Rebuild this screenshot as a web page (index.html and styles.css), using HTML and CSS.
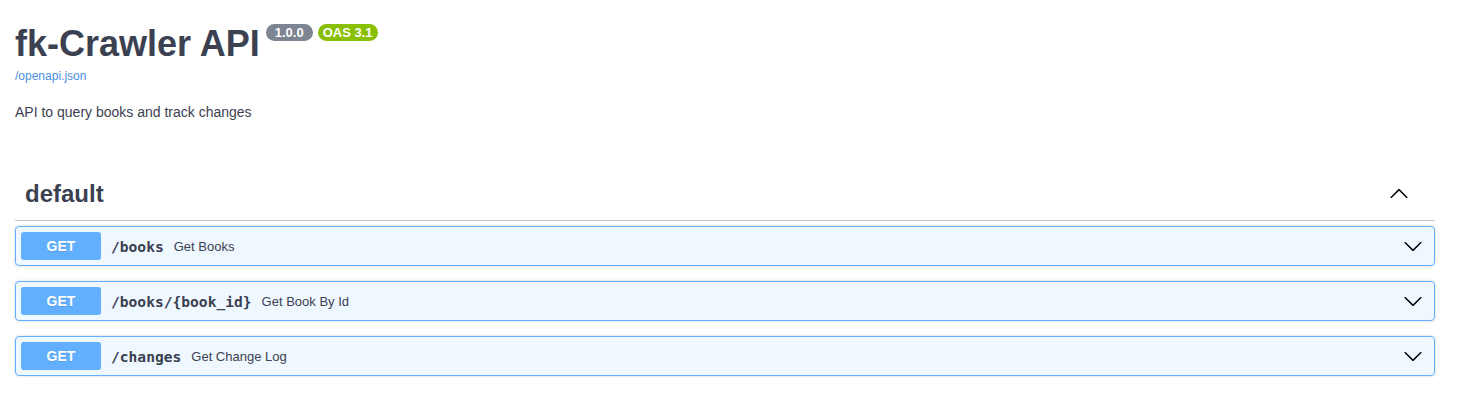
FILE: index.html
```html
<!DOCTYPE html>
<html lang="en">
<head>
<meta charset="utf-8">
<title>fk-Crawler API</title>
<link rel="stylesheet" href="styles.css">
</head>
<body>
<div class="page">
  <div class="info">
    <div class="title-row">
      <h2 class="title">fk-Crawler API</h2>
      <span class="badge badge-version">1.0.0</span>
      <span class="badge badge-oas">OAS 3.1</span>
    </div>
    <a class="spec-link" href="#">/openapi.json</a>
    <p class="desc">API to query books and track changes</p>
  </div>

  <section class="tag-section">
    <h3 class="tag-head">
      <span class="tag-name">default</span>
      <svg class="arrow arrow-up" width="20" height="20" viewBox="0 0 20 20"><path d="M17.418 6.109c.272-.268.709-.268.979 0s.271.701 0 .969l-7.908 7.83c-.27.268-.707.268-.979 0l-7.908-7.830c-.27-.268-.27-.701 0-.969.271-.268.709-.268.979 0L10 13.25l7.418-7.141z"/></svg>
    </h3>

    <div class="op">
      <span class="method">GET</span>
      <span class="path">/books</span>
      <span class="summary">Get Books</span>
      <svg class="arrow" width="20" height="20" viewBox="0 0 20 20"><path d="M17.418 6.109c.272-.268.709-.268.979 0s.271.701 0 .969l-7.908 7.83c-.27.268-.707.268-.979 0l-7.908-7.83c-.27-.268-.27-.701 0-.969.271-.268.709-.268.979 0L10 13.25l7.418-7.141z"/></svg>
    </div>
    <div class="op">
      <span class="method">GET</span>
      <span class="path">/books/{book_id}</span>
      <span class="summary">Get Book By Id</span>
      <svg class="arrow" width="20" height="20" viewBox="0 0 20 20"><path d="M17.418 6.109c.272-.268.709-.268.979 0s.271.701 0 .969l-7.908 7.83c-.27.268-.707.268-.979 0l-7.908-7.83c-.27-.268-.27-.701 0-.969.271-.268.709-.268.979 0L10 13.25l7.418-7.141z"/></svg>
    </div>
    <div class="op">
      <span class="method">GET</span>
      <span class="path">/changes</span>
      <span class="summary">Get Change Log</span>
      <svg class="arrow" width="20" height="20" viewBox="0 0 20 20"><path d="M17.418 6.109c.272-.268.709-.268.979 0s.271.701 0 .969l-7.908 7.83c-.27.268-.707.268-.979 0l-7.908-7.83c-.27-.268-.27-.701 0-.969.271-.268.709-.268.979 0L10 13.25l7.418-7.141z"/></svg>
    </div>
  </section>
</div>
</body>
</html>
```

FILE: styles.css
```css
html, body {
  margin: 0;
  padding: 0;
  background: #fff;
}

body {
  font-family: "Liberation Sans", Arial, sans-serif;
  color: #3b4151;
}

.page {
  width: 1420px;
  margin-left: 15px;
}

.info {
  padding-top: 24px;
}

.title-row {
  display: flex;
  align-items: flex-start;
}

.title {
  margin: 0;
  font-size: 36px;
  line-height: 40px;
  font-weight: 700;
  color: #3b4151;
}

.badge {
  margin: 0 0 0 5px;
  border-radius: 57px;
  color: #fff;
  font-size: 13px;
  font-weight: 700;
  line-height: 15px;
  padding: 1px 9px;
}

.badge-version {
  background: #7d8492;
  margin-left: 6px;
}

.badge-oas {
  background: #89bf04;
  padding: 1px 5px;
}

.spec-link {
  display: block;
  margin-top: 5px;
  font-size: 12px;
  line-height: 14px;
  color: #4990e2;
  text-decoration: none;
}

.desc {
  margin: 21px 0 0;
  font-size: 14px;
  line-height: 16px;
  color: #3b4151;
}

.tag-section {
  margin-top: 48px;
}

.tag-head {
  display: flex;
  align-items: center;
  margin: 0 0 5px;
  padding: 10px 26px 10px 10px;
  height: 32px;
  border-bottom: 1px solid rgba(59, 65, 81, 0.3);
  font-size: 24px;
  font-weight: 700;
  color: #3b4151;
}

.tag-name {
  flex: 1 1 auto;
  line-height: 28px;
}

.arrow {
  flex: none;
  fill: #000;
}

.arrow-up {
  transform: rotate(180deg);
}

.op {
  display: flex;
  align-items: center;
  box-sizing: border-box;
  height: 40px;
  margin: 0 0 15px;
  padding: 5px 11px 5px 5px;
  border: 1px solid #61affe;
  border-radius: 4px;
  background: rgba(97, 175, 254, 0.1);
  box-shadow: 0 0 3px rgba(0, 0, 0, 0.19);
}

.method {
  flex: none;
  min-width: 80px;
  padding: 6px 0;
  border-radius: 3px;
  background: #61affe;
  color: #fff;
  font-size: 14px;
  line-height: 16px;
  font-weight: 700;
  text-align: center;
  text-shadow: 0 1px 0 rgba(0, 0, 0, 0.1);
}

.path {
  flex: none;
  padding: 0 10px;
  font-family: "DejaVu Sans Mono", "Liberation Mono", monospace;
  font-size: 14.6px;
  font-weight: 700;
  color: #3b4151;
}

.summary {
  flex: 1 1 auto;
  font-size: 13px;
  color: #3b4151;
}
```
